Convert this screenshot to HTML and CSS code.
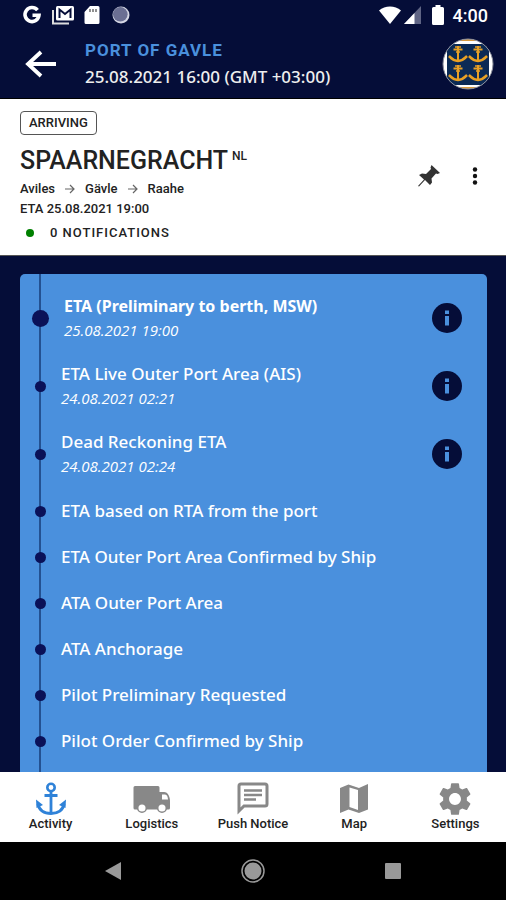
FILE: index.html
```
<!DOCTYPE html>
<html lang="en">
<head>
    <meta charset="UTF-8">
    <meta name="viewport" content="width=device-width, initial-scale=1.0">
    <title>Port Activity</title>
    <link rel="stylesheet" href="styles.css">
</head>
<body>
    <div class="status-bar">
        <div class="status-icons">
            <svg width="20" height="20" viewBox="0 0 20 20"><path d="M15.5 5.2A7 7 0 1 0 17 10.200H10.500" fill="none" stroke="#fff" stroke-width="3.600"/></svg>
            <svg width="22" height="20" viewBox="0 0 22 20"><path d="M1 5v13.500h16" fill="none" stroke="#ddd" stroke-width="2"/><rect x="4" y="1" width="18" height="14.500" rx="1.500" fill="#fff"/><path d="M7.500 13V4.500l5.500 4.500 5.500-4.500V13" fill="none" stroke="#050d38" stroke-width="2"/></svg>
            <svg width="16" height="20" viewBox="0 0 16 20"><path d="M6 1h8a1.500 1.500 0 0 1 1.500 1.500v15A1.500 1.500 0 0 1 14 19H2a1.500 1.500 0 0 1-1.500-1.500V7z" fill="#fff"/><path d="M6 4v3M9 4v3M12 4v3" stroke="#555" stroke-width="1.300"/></svg>
            <svg class="sync" width="18" height="20" viewBox="0 0 18 20"><circle cx="9" cy="10" r="8.500" fill="#d5d7e4"/><circle cx="8.300" cy="9.300" r="7.300" fill="#6b6f93"/></svg>
        </div>
        <div class="status-icons status-right">
            <svg width="22" height="18" viewBox="0 0 22 18"><path d="M0 4.500C6-1 16-1 22 4.500L11 18z" fill="#fff"/></svg>
            <svg width="17" height="18" viewBox="0 0 17 18"><path d="M17 0v18H0z" fill="#5f6484"/><path d="M10.500 7v11H0z" fill="#fff"/></svg>
            <svg class="battery" width="12" height="20" viewBox="0 0 12 20"><path d="M3.500 0h5v2H10.500A1.500 1.500 0 0 1 12 3.500v15a1.500 1.500 0 0 1-1.500 1.500h-9A1.500 1.500 0 0 1 0 18.500v-15A1.500 1.500 0 0 1 1.500 2h2z" fill="#fff"/></svg>
            <span class="clock">4:00</span>
        </div>
    </div>

    <header class="port-header">
        <button class="icon-btn" aria-label="Back">
            <svg width="32" height="28" viewBox="0 0 32 28"><path d="M31 14H3M16 2L3 14l13 12" fill="none" stroke="#fff" stroke-width="3.800"/></svg>
        </button>
        <div class="port-title">
            <h1>PORT OF GAVLE</h1>
            <p>25.08.2021 16:00 (GMT +03:00)</p>
        </div>
        <svg class="port-logo" width="52" height="52" viewBox="0 0 52 52">
            <defs>
                <clipPath id="badge"><circle cx="26" cy="26" r="25"/></clipPath>
                <g id="crest" fill="none" stroke="#e8a024">
                    <path d="M9 0v15M4.500 3.500h9" stroke-width="2"/>
                    <path d="M6 1h6M7 6h4" stroke-width="1.500"/>
                    <path d="M0 10c2 2 4 4.500 9 5 5-.5 7-3 9-5" stroke-width="2.600"/>
                </g>
            </defs>
            <g clip-path="url(#badge)">
                <rect width="52" height="52" fill="#fff"/>
                <path d="M0 0h52v3H0zM0 49h52v3H0z" fill="#d99a3c"/>
                <rect x="5" y="6" width="42" height="41" fill="#0b2a55"/>
                <use href="#crest" x="7" y="8"/>
                <use href="#crest" x="27" y="8"/>
                <use href="#crest" x="7" y="27"/>
                <use href="#crest" x="27" y="27"/>
            </g>
            <circle cx="26" cy="26" r="25" fill="none" stroke="#8c8f9c"/>
        </svg>
    </header>

    <section class="vessel">
        <div class="vessel-info">
            <span class="tag">ARRIVING</span>
            <h2>SPAARNEGRACHT<sup>NL</sup></h2>
            <p class="route">
                <span>Aviles</span>
                <svg width="10" height="10" viewBox="0 0 10 10"><path d="M0 5h9M5 1l4 4-4 4" fill="none" stroke="#666" stroke-width="1.200"/></svg>
                <span>Gävle</span>
                <svg width="10" height="10" viewBox="0 0 10 10"><path d="M0 5h9M5 1l4 4-4 4" fill="none" stroke="#666" stroke-width="1.200"/></svg>
                <span>Raahe</span>
            </p>
            <p class="vessel-eta">ETA 25.08.2021 19:00</p>
            <p class="notifications"><span class="green-dot"></span>0 NOTIFICATIONS</p>
        </div>
        <div class="vessel-actions">
            <button class="icon-btn" aria-label="Pin">
                <svg width="22" height="22" viewBox="0 0 22 22"><path d="M13.500 0L22 8l-2.500 1-1.500-.5-4.500 5 .5 4-2 2.500-5-5L1 21.500 0 21l6-6.500L1 10l3-1.500 4 .5 5-5-.5-1.500z" fill="#333"/></svg>
            </button>
            <button class="icon-btn" aria-label="More">
                <svg width="6" height="18" viewBox="0 0 6 18"><g fill="#111"><circle cx="3" cy="2.500" r="2.200"/><circle cx="3" cy="9" r="2.200"/><circle cx="3" cy="15.500" r="2.200"/></g></svg>
            </button>
        </div>
    </section>

    <main class="timeline">
        <ul class="events">
            <li class="event detailed current">
                <div class="event-text"><strong>ETA (Preliminary to berth, MSW)</strong><em>25.08.2021 19:00</em></div>
                <button class="icon-btn" aria-label="Info"><svg width="30" height="30" viewBox="0 0 30 30"><circle cx="15" cy="15" r="15" fill="#050d38"/><path d="M13 7.500h4v3.500h-4zM13 13h4v9.500h-4z" fill="#4a90dd"/></svg></button>
            </li>
            <li class="event detailed">
                <div class="event-text"><span>ETA Live Outer Port Area (AIS)</span><em>24.08.2021 02:21</em></div>
                <button class="icon-btn" aria-label="Info"><svg width="30" height="30" viewBox="0 0 30 30"><circle cx="15" cy="15" r="15" fill="#050d38"/><path d="M13 7.500h4v3.500h-4zM13 13h4v9.500h-4z" fill="#4a90dd"/></svg></button>
            </li>
            <li class="event detailed">
                <div class="event-text"><span>Dead Reckoning ETA</span><em>24.08.2021 02:24</em></div>
                <button class="icon-btn" aria-label="Info"><svg width="30" height="30" viewBox="0 0 30 30"><circle cx="15" cy="15" r="15" fill="#050d38"/><path d="M13 7.500h4v3.500h-4zM13 13h4v9.500h-4z" fill="#4a90dd"/></svg></button>
            </li>
            <li class="event"><div class="event-text">ETA based on RTA from the port</div></li>
            <li class="event"><div class="event-text">ETA Outer Port Area Confirmed by Ship</div></li>
            <li class="event"><div class="event-text">ATA Outer Port Area</div></li>
            <li class="event"><div class="event-text">ATA Anchorage</div></li>
            <li class="event"><div class="event-text">Pilot Preliminary Requested</div></li>
            <li class="event"><div class="event-text">Pilot Order Confirmed by Ship</div></li>
        </ul>
    </main>

    <nav class="tabs">
        <a href="#" class="tab active">
            <svg width="32" height="34" viewBox="0 0 32 34"><g fill="none" stroke="currentColor"><circle cx="16" cy="5.500" r="3.700" stroke-width="2.600"/><path d="M16 9v23M9.500 13.500h13" stroke-width="2.800"/><path d="M3 22c1 6 6 9.500 13 9.500S28 28 29 22" stroke-width="3"/></g><path d="M1 17.500l7 5.500-6.500 3zM31 17.500L24 23l6.500 3z" fill="currentColor"/></svg>
            <span>Activity</span>
        </a>
        <a href="#" class="tab">
            <svg width="38" height="34" viewBox="0 0 38 34"><path d="M2 4h23a1.500 1.500 0 0 1 1.500 1.500V10H31c4 0 6 5 6 9v7a1.500 1.500 0 0 1-1.500 1.500H2A1.500 1.500 0 0 1 .5 26V5.500A1.500 1.500 0 0 1 2 4z" fill="currentColor"/><path d="M29 12.500h3c2 0 2.800 2.500 3 5h-6z" fill="#fff"/><g fill="#fff" stroke="currentColor" stroke-width="1.500"><circle cx="9" cy="26" r="4.300"/><circle cx="29" cy="26" r="4.300"/></g></svg>
            <span>Logistics</span>
        </a>
        <a href="#" class="tab">
            <svg width="32" height="34" viewBox="0 0 32 34"><path d="M2 29V4a2 2 0 0 1 2-2h24a2 2 0 0 1 2 2v18a2 2 0 0 1-2 2H7z" fill="none" stroke="currentColor" stroke-width="3"/><path d="M7 8.500h18M7 13h18M7 17.500h12" stroke="currentColor" stroke-width="2.600"/></svg>
            <span>Push Notice</span>
        </a>
        <a href="#" class="tab">
            <svg width="30" height="34" viewBox="0 0 30 34"><path d="M1 6l8.500-3.500L20 6l9-4v25.500L20 31 9.500 27.500 1 31z" fill="currentColor"/><path d="M10.500 5.500L19 8v20l-8.500-3z" fill="#fff"/></svg>
            <span>Map</span>
        </a>
        <a href="#" class="tab">
            <svg width="34" height="34" viewBox="1.700 1.700 20.600 20.600"><path fill="currentColor" d="M19.140 12.940c.04-.3.06-.61.06-.94 0-.32-.02-.64-.07-.94l2.030-1.580c.18-.14.23-.41.12-.61l-1.920-3.320c-.12-.22-.37-.29-.59-.22l-2.390.96c-.5-.38-1.030-.7-1.620-.94l-.36-2.540c-.04-.24-.24-.41-.48-.41h-3.840c-.24 0-.43.17-.47.41l-.36 2.540c-.59.24-1.130.57-1.620.94l-2.390-.96c-.22-.08-.47 0-.59.22L2.740 8.870c-.12.21-.08.47.12.61l2.030 1.580c-.05.3-.09.63-.09.94s.02.64.07.94l-2.030 1.580c-.18.14-.23.41-.12.61l1.920 3.320c.12.22.37.29.59.22l2.390-.96c.5.38 1.030.7 1.620.94l.36 2.540c.05.24.24.41.48.41h3.840c.24 0 .44-.17.47-.41l.36-2.540c.59-.24 1.130-.56 1.620-.94l2.390.96c.22.08.47 0 .59-.22l1.920-3.320c.12-.22.07-.47-.12-.61l-2.010-1.580zM12 15.600c-1.980 0-3.600-1.620-3.600-3.600s1.620-3.600 3.600-3.600 3.600 1.620 3.600 3.600-1.620 3.600-3.600 3.600z"/></svg>
            <span>Settings</span>
        </a>
    </nav>

    <div class="system-nav">
        <button class="icon-btn" aria-label="System back"><svg width="16" height="18" viewBox="0 0 16 18"><path d="M16 0v18L0 9z" fill="#999"/></svg></button>
        <button class="icon-btn" aria-label="Home"><svg width="24" height="24" viewBox="0 0 24 24"><circle cx="12" cy="12" r="11" fill="none" stroke="#999" stroke-width="1.500"/><circle cx="12" cy="12" r="8.500" fill="#999"/></svg></button>
        <button class="icon-btn" aria-label="Recent apps"><svg width="16" height="16" viewBox="0 0 16 16"><rect width="16" height="16" rx="1" fill="#999"/></svg></button>
    </div>
</body>
</html>
```
FILE: styles.css
```
* {
    box-sizing: border-box;
}

body {
    display: flex;
    flex-direction: column;
    height: 100vh;
    margin: 0;
    background-color: #050d38;
    color: #222;
    font-family: Roboto, sans-serif;
    overflow: hidden;
}

h1, h2, p, ul {
    margin: 0;
    padding: 0;
    font-weight: 500;
}

.icon-btn {
    display: flex;
    padding: 0;
    border: none;
    background: none;
    cursor: pointer;
}

/* Status bar */
.status-bar {
    display: flex;
    justify-content: space-between;
    align-items: center;
    height: 30px;
    padding: 0 18px 0 22px;
}

.status-icons {
    display: flex;
    align-items: center;
    gap: 10px;
}

.status-right {
    gap: 3px;
}

.sync {
    margin-left: 2px;
}

.battery {
    margin: 0 6px 0 8px;
}

.clock {
    color: white;
    font-size: 18px;
    font-weight: 500;
}

/* Port header */
.port-header {
    display: flex;
    align-items: center;
    height: 69px;
    padding: 0 12px 0 25px;
    border-bottom: 1px solid #000;
}

.port-title {
    flex: 1;
    margin-left: 28px;
}

.port-title h1 {
    color: #4a90dd;
    font-size: 17px;
    font-weight: 700;
    line-height: 26px;
    letter-spacing: 1px;
}

.port-title p {
    color: #eee;
    font-family: "Noto Sans", sans-serif;
    font-size: 17px;
    line-height: 28px;
}

/* Vessel */
.vessel {
    display: flex;
    align-items: center;
    justify-content: space-between;
    padding: 12px 28px 8px 20px;
    background-color: white;
    border-bottom: 1px solid #555;
}

.tag {
    display: inline-block;
    padding: 0 8px;
    border: 1px solid #555;
    border-radius: 4px;
    font-size: 13px;
    font-weight: 500;
    line-height: 22px;
}

.vessel h2 {
    margin-top: 8px;
    font-size: 25px;
    line-height: 36px;
}

.vessel sup {
    margin-left: 4px;
    font-size: 12px;
    line-height: 12px;
    vertical-align: 9px;
}

.route {
    display: flex;
    align-items: center;
    gap: 10px;
}

.route, .vessel-eta {
    font-size: 13px;
    line-height: 20px;
}

.notifications {
    display: flex;
    align-items: center;
    font-size: 13px;
    line-height: 28px;
    letter-spacing: 1px;
}

.green-dot {
    width: 8px;
    height: 8px;
    margin: 0 16px 0 6px;
    border-radius: 50%;
    background-color: #008000;
}

.vessel-actions {
    display: flex;
    align-items: center;
    gap: 32px;
    margin-bottom: 6px;
}

/* Timeline */
.timeline {
    flex: 1;
    min-height: 0;
    padding: 18px 19px 0 20px;
}

.events {
    position: relative;
    height: 100%;
    padding-top: 10px;
    border-radius: 5px 5px 0 0;
    background-color: #4a90dd;
    list-style: none;
    overflow: hidden;
}

.events::before {
    content: "";
    position: absolute;
    top: 0;
    bottom: 0;
    left: 19px;
    width: 2px;
    background-color: #235191;
}

.event {
    display: flex;
    align-items: center;
    height: 46px;
    padding: 0 25px 0 15px;
    color: white;
    font-family: "Noto Sans", sans-serif;
    font-size: 17px;
    line-height: 24px;
}

.event::before {
    content: "";
    position: relative;
    width: 11px;
    height: 11px;
    border-radius: 50%;
    background-color: #0a1158;
}

.event-text {
    display: flex;
    flex: 1;
    flex-direction: column;
    margin-left: 15px;
}

.event.detailed {
    height: 68px;
}

.event strong {
    font-size: 16px;
}

.event em {
    font-family: "Open Sans", sans-serif;
    font-size: 15px;
}

.event.current {
    padding-left: 12px;
}

.event.current::before {
    width: 17px;
    height: 17px;
}

/* Tabs */
.tabs {
    display: flex;
    height: 70px;
    background-color: white;
}

.tab {
    display: flex;
    flex: 1;
    flex-direction: column;
    align-items: center;
    justify-content: space-between;
    padding: 10px 0;
    color: #888;
    font-size: 13px;
    font-weight: 500;
    line-height: 16px;
    text-decoration: none;
}

.tab svg {
    height: 34px;
}

.tab span {
    color: #222;
}

.tab.active {
    color: #2f82d8;
}

/* System navigation */
.system-nav {
    display: flex;
    align-items: center;
    justify-content: space-between;
    height: 58px;
    padding: 0 105px;
    background-color: black;
}
```
